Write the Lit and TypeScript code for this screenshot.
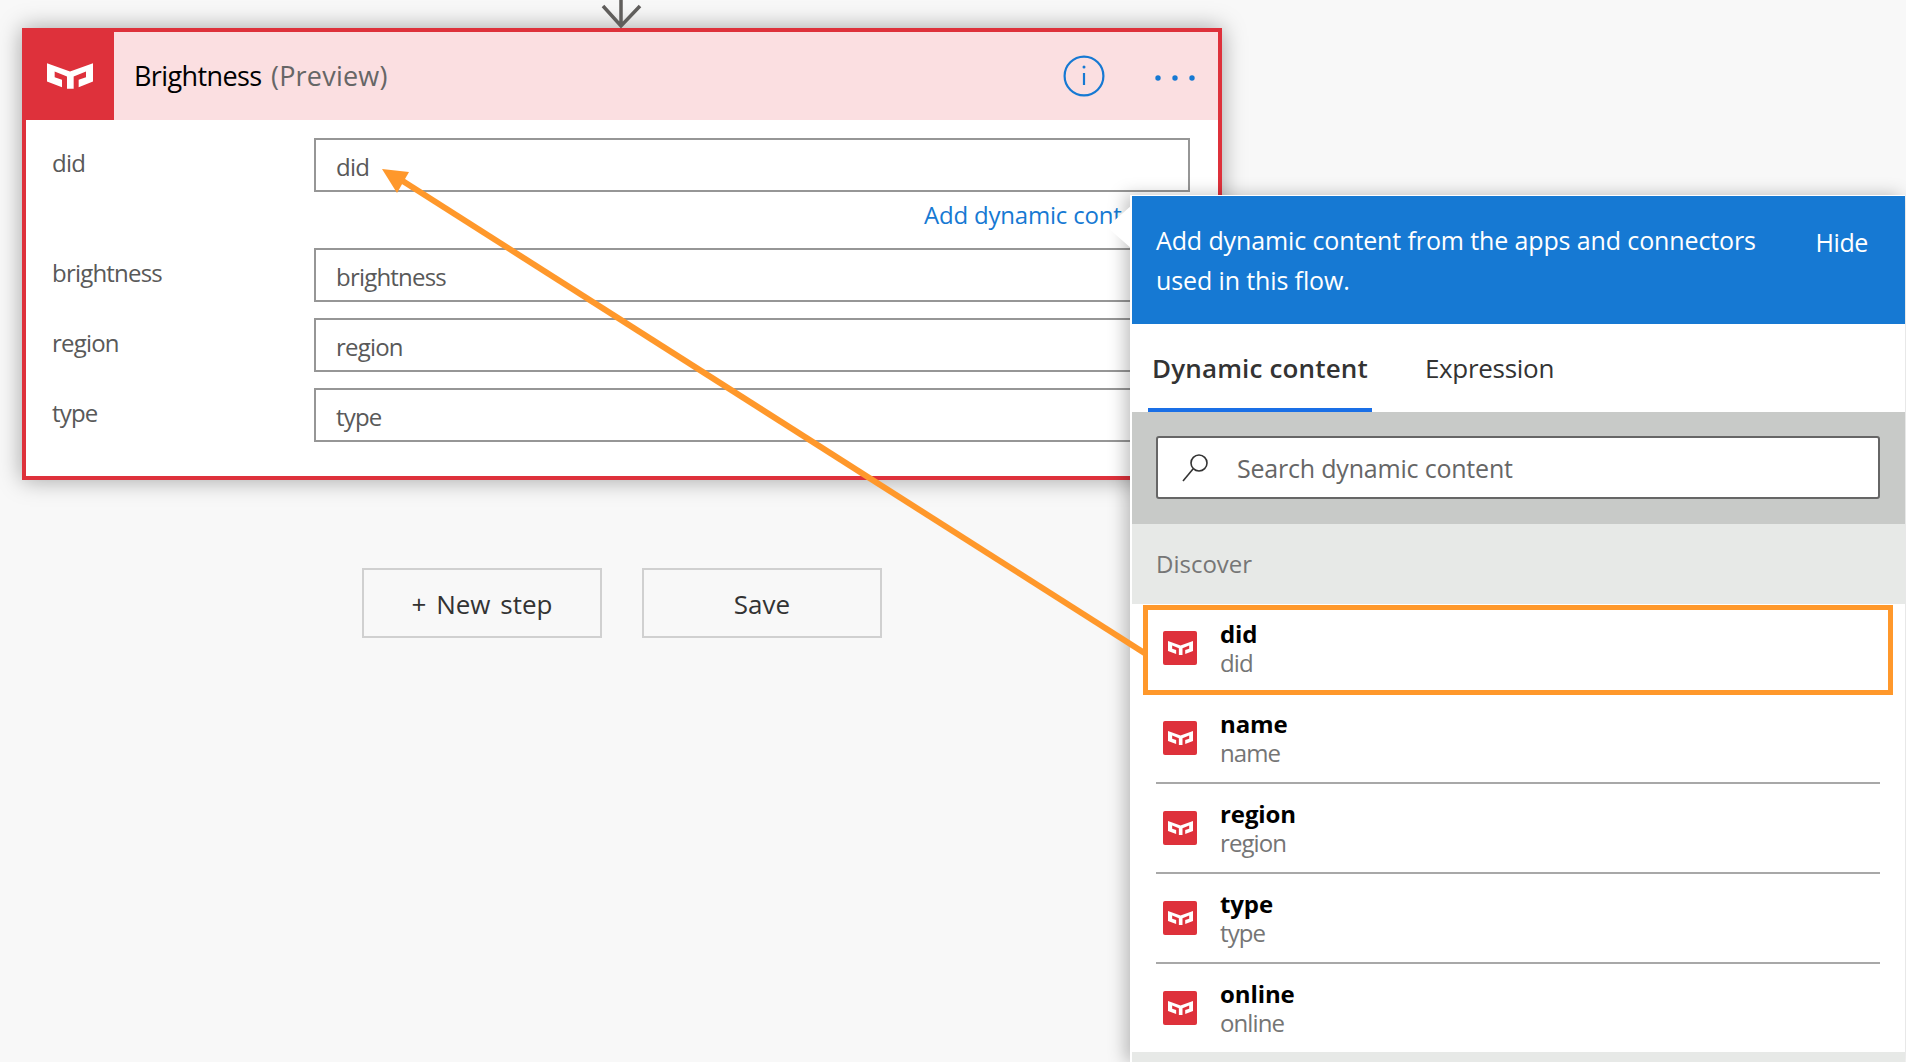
import { LitElement, html, css, svg } from 'lit'
import { customElement } from 'lit/decorators.js'

const FONT = css`'Open Sans', 'Noto Sans', sans-serif`

const logo = (cls: string) => html`
    <svg class=${cls} viewBox="0 0 138 77" fill="#fff">
        <path d="M0 0L69 25L138 0V55L95 72V50L117 42V25L80 40V77H60V40L23 25V42L45 50V72L0 55Z" />
    </svg>
`

const fields = [
    { name: 'did', hasLink: true },
    { name: 'brightness', hasLink: false },
    { name: 'region', hasLink: false },
    { name: 'type', hasLink: false },
]

const tokens = ['did', 'name', 'region', 'type', 'online']

@customElement('flow-card')
export class FlowCard extends LitElement {
    static styles = css`
        :host {
            display: block;
            width: 1200px;
            margin-left: 22px;
            box-sizing: border-box;
            border: 4px solid #de313b;
            background: #fff;
            box-shadow: 0 0 22px rgba(0, 0, 0, 0.35);
            font-family: ${FONT};
        }
        .head {
            display: flex;
            align-items: center;
            height: 88px;
            background: #fbdfe1;
        }
        .tile {
            display: flex;
            align-items: center;
            justify-content: center;
            width: 88px;
            height: 88px;
            background: #de313b;
        }
        .tile-logo {
            width: 46px;
            height: 26px;
        }
        .title {
            flex: 1;
            margin-left: 20px;
            padding-bottom: 2px;
            font-size: 27px;
            color: #000;
            letter-spacing: -0.6px;
        }
        .title span {
            margin-left: 3px;
            color: #666;
            letter-spacing: 0.2px;
        }
        .info {
            width: 42px;
            height: 42px;
            margin-right: 50px;
        }
        .dots {
            width: 40px;
            height: 8px;
            margin: 3px 23px 0 0;
        }
        .body {
            padding: 18px 28px 34px 26px;
        }
        .row {
            display: flex;
            margin-top: 16px;
        }
        .row:first-child {
            margin-top: 0;
        }
        .label {
            width: 262px;
            padding-top: 10px;
            font-size: 24px;
            line-height: 30px;
            color: #595959;
            letter-spacing: -0.8px;
        }
        .box {
            flex: 1;
        }
        .input {
            box-sizing: border-box;
            height: 54px;
            padding: 12px 20px 0;
            border: 2px solid #969696;
            font-size: 24px;
            line-height: 30px;
            color: #595959;
            letter-spacing: -0.8px;
        }
        .link {
            box-sizing: border-box;
            height: 40px;
            padding-top: 8px;
            margin-left: 610px;
            font-size: 24px;
            line-height: 30px;
            color: #1679d3;
            white-space: nowrap;
            letter-spacing: -0.2px;
        }
    `

    render() {
        return html`
            <div class="head">
                <div class="tile">${logo('tile-logo')}</div>
                <div class="title">Brightness <span>(Preview)</span></div>
                <svg class="info" viewBox="0 0 42 42" fill="none" stroke="#1679d3" stroke-width="2.2">
                    <circle cx="21" cy="21" r="19.4" />
                    <path d="M21 18V30" />
                    <circle cx="21" cy="12" r="1.5" fill="#1679d3" stroke="none" />
                </svg>
                <svg class="dots" viewBox="0 0 40 8" fill="#1679d3">
                    <circle cx="3" cy="4" r="2.7" />
                    <circle cx="20" cy="4" r="2.7" />
                    <circle cx="37" cy="4" r="2.7" />
                </svg>
            </div>
            <div class="body">
                ${fields.map(
                    (f) => html`
                        <div class="row">
                            <div class="label">${f.name}</div>
                            <div class="box">
                                <div class="input">${f.name}</div>
                                ${f.hasLink ? html`<div class="link">Add dynamic content</div>` : ''}
                            </div>
                        </div>
                    `
                )}
            </div>
        `
    }
}

@customElement('dynamic-panel')
export class DynamicPanel extends LitElement {
    static styles = css`
        :host {
            display: block;
            position: absolute;
            left: 1130px;
            top: 195px;
            width: 775px;
            height: 867px;
            box-sizing: border-box;
            border-top: 1px solid #fff;
            border-left: 2px solid #fff;
            background: #fff;
            box-shadow: -5px 0 16px rgba(0, 0, 0, 0.25);
            font-family: ${FONT};
        }
        .beak {
            position: absolute;
            left: -25px;
            top: 9px;
            width: 25px;
            height: 44px;
            background: #fff;
            clip-path: polygon(100% 0, 0 50%, 100% 100%);
        }
        .banner {
            display: flex;
            height: 128px;
            box-sizing: border-box;
            padding: 24px 20px 0 24px;
            background: #1679d3;
            color: #fff;
            font-size: 25px;
            line-height: 40px;
        }
        .banner p {
            flex: 1;
            margin: 0;
            padding-right: 30px;
            letter-spacing: -0.12px;
        }
        .hide {
            padding-top: 2px;
            margin-right: 17px;
            letter-spacing: -0.4px;
        }
        .tabs {
            display: flex;
            height: 88px;
            padding-left: 16px;
            font-size: 26px;
            color: #333;
            letter-spacing: -0.3px;
        }
        .tab {
            box-sizing: border-box;
            padding: 26px 4px 0;
            margin-right: 49px;
            line-height: 36px;
        }
        .tab.on {
            font-weight: 600;
            letter-spacing: 0.15px;
            border-bottom: 4px solid #1a6fe6;
        }
        .search-zone {
            height: 112px;
            box-sizing: border-box;
            padding: 24px 25px 0 24px;
            background: #c8cac8;
        }
        .search {
            display: flex;
            align-items: center;
            height: 63px;
            box-sizing: border-box;
            border: 2px solid #666;
            border-radius: 3px;
            background: #fff;
            padding-left: 22px;
            font-size: 25px;
            color: #666;
            letter-spacing: -0.2px;
        }
        .search svg {
            width: 30px;
            height: 30px;
            margin-right: 27px;
        }
        .discover {
            height: 80px;
            box-sizing: border-box;
            padding: 22px 24px 0;
            background: #e7e9e7;
            font-size: 24px;
            line-height: 36px;
            color: #767676;
        }
        .list {
            margin: 0 25px 0 24px;
        }
        .item {
            display: flex;
            align-items: center;
            height: 90px;
            box-sizing: border-box;
            border-bottom: 2px solid #a8a8a8;
            padding-left: 7px;
        }
        .item:first-child,
        .item:last-child {
            border-bottom-color: transparent;
        }
        .tile {
            display: flex;
            align-items: center;
            justify-content: center;
            width: 34px;
            height: 34px;
            margin-right: 23px;
            border-radius: 2px;
            background: #de313b;
        }
        .tile svg {
            width: 25px;
            height: 14px;
        }
        .text {
            padding-top: 1px;
        }
        .name {
            font-size: 24px;
            font-weight: 700;
            line-height: 28px;
            color: #000;
            letter-spacing: -0.1px;
        }
        .sub {
            margin-top: 1px;
            font-size: 24px;
            line-height: 28px;
            color: #757575;
            letter-spacing: -0.9px;
        }
        .foot {
            position: relative;
            height: 12px;
            margin-top: -2px;
            background: #e7e9e7;
        }
    `

    render() {
        return html`
            <div class="beak"></div>
            <div class="banner">
                <p>Add dynamic content from the apps and connectors used in this flow.</p>
                <div class="hide">Hide</div>
            </div>
            <div class="tabs">
                <div class="tab on">Dynamic content</div>
                <div class="tab">Expression</div>
            </div>
            <div class="search-zone">
                <div class="search">
                    <svg viewBox="0 0 30 30" fill="none" stroke="#333" stroke-width="1.6">
                        <circle cx="19" cy="10" r="8" />
                        <path d="M13 16L3 28" />
                    </svg>
                    Search dynamic content
                </div>
            </div>
            <div class="discover">Discover</div>
            <div class="list">
                ${tokens.map(
                    (t) => html`
                        <div class="item">
                            <div class="tile">${logo('')}</div>
                            <div class="text">
                                <div class="name">${t}</div>
                                <div class="sub">${t}</div>
                            </div>
                        </div>
                    `
                )}
            </div>
            <div class="foot"></div>
        `
    }
}

@customElement('app-root')
export class AppRoot extends LitElement {
    static styles = css`
        :host {
            display: block;
            position: relative;
            width: 1906px;
            height: 1062px;
            overflow: hidden;
            background: #f8f8f8;
            font-family: ${FONT};
        }
        .canvas {
            padding-top: 28px;
        }
        .connector {
            position: absolute;
            left: 600px;
            top: 0;
            width: 44px;
            height: 30px;
        }
        .actions {
            display: flex;
            gap: 40px;
            margin: 88px 0 0 362px;
        }
        .btn {
            display: flex;
            align-items: center;
            justify-content: center;
            box-sizing: border-box;
            width: 240px;
            height: 70px;
            padding-top: 2px;
            border: 2px solid #d0d0d0;
            font-size: 26px;
            color: #333;
            word-spacing: 3px;
        }
        .callout {
            position: absolute;
            left: 0;
            top: 0;
            width: 1906px;
            height: 1062px;
            pointer-events: none;
        }
        .highlight {
            position: absolute;
            left: 1143px;
            top: 605px;
            width: 750px;
            height: 90px;
            box-sizing: border-box;
            border: 5px solid #ff982b;
        }
    `

    render() {
        return html`
            <div class="canvas">
                <flow-card></flow-card>
                <div class="actions">
                    <div class="btn">+ New step</div>
                    <div class="btn">Save</div>
                </div>
            </div>
            <svg class="connector" viewBox="0 0 44 30" fill="none" stroke="#605e5c" stroke-width="3.5">
                <path d="M21 0V26M3 6L21 26L40 6" />
            </svg>
            <dynamic-panel></dynamic-panel>
            <svg class="callout" viewBox="0 0 1906 1062">
                ${svg`<path d="M1146 654L398 178" stroke="#ff982b" stroke-width="6" fill="none" />`}
                ${svg`<path d="M382 169L409 172L397 193Z" fill="#ff982b" />`}
            </svg>
            <div class="highlight"></div>
        `
    }
}
